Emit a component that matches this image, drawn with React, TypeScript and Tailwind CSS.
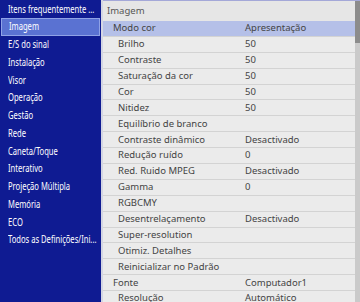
const leftItems = [
  "Imagem",
  "E/S do sinal",
  "Instalação",
  "Visor",
  "Operação",
  "Gestão",
  "Rede",
  "Caneta/Toque",
  "Interativo",
  "Projeção Múltipla",
  "Memória",
  "ECO",
  "Todos as Definições/Ini...",
];

const rows: { label: string; value?: string; top?: boolean }[] = [
  { label: "Modo cor", value: "Apresentação", top: true },
  { label: "Brilho", value: "50" },
  { label: "Contraste", value: "50" },
  { label: "Saturação da cor", value: "50" },
  { label: "Cor", value: "50" },
  { label: "Nitidez", value: "50" },
  { label: "Equilíbrio de branco" },
  { label: "Contraste dinâmico", value: "Desactivado" },
  { label: "Redução ruído", value: "0" },
  { label: "Red. Ruido MPEG", value: "Desactivado" },
  { label: "Gamma", value: "0" },
  { label: "RGBCMY" },
  { label: "Desentrelaçamento", value: "Desactivado" },
  { label: "Super-resolution" },
  { label: "Otimiz. Detalhes" },
  { label: "Reinicializar no Padrão" },
  { label: "Fonte", value: "Computador1", top: true },
  { label: "Resolução", value: "Automático" },
];

function MenuText({ children }: { children: string }) {
  // the projector menu squeezes its left column text horizontally
  return <span className="inline-block origin-left scale-x-[0.76] whitespace-nowrap">{children}</span>;
}

export default function App() {
  return (
    <div
      className="flex h-[302px] w-[360px] overflow-hidden bg-[#d4d6e4] text-[9.5px]"
      style={{ fontFamily: '"Noto Sans", "Open Sans", sans-serif' }}
    >
      {/* Left menu */}
      <div className="flex w-[101px] shrink-0 flex-col overflow-hidden bg-[#0f1b92] text-[10px] text-white">
        <div className="flex h-[18px] shrink-0 items-center pl-2">
          <MenuText>Itens frequentemente ...</MenuText>
        </div>
        {leftItems.map((item, i) => (
          <div key={item} className="h-[17.75px] shrink-0 px-px">
            <div
              className={`flex h-full items-center pl-[7px] ${
                i === 0 ? "border border-[#8fa2e6] bg-[#5a72d2] pl-[6px]" : ""
              }`}
            >
              <MenuText>{item}</MenuText>
            </div>
          </div>
        ))}
      </div>

      {/* Right panel */}
      <div className="ml-[2px] flex flex-1 overflow-hidden border-t border-[#a4a8d8] bg-[#ebebeb] text-[#444]">
        <div className="flex flex-1 flex-col">
          <div className="flex h-[20px] shrink-0 items-center bg-[#e6e6e6] pl-[4px] text-[#555]">
            Imagem
          </div>
          {rows.map((r, i) => (
            <div
              key={r.label}
              className={`flex h-[15.9px] shrink-0 items-center border-b border-[#d3d3d3] ${
                i === 0 ? "bg-[#b5c0e8]" : ""
              }`}
            >
              <div className={`w-[142px] whitespace-nowrap ${r.top ? "pl-[10px]" : "pl-[15px]"}`}>
                {r.label}
              </div>
              <div className="whitespace-nowrap">{r.value}</div>
            </div>
          ))}
        </div>
        {/* Scrollbar */}
        <div className="flex w-[5px] shrink-0 flex-col bg-[#cacaca]">
          <div className="h-[42px] bg-[#8c8c8c]" />
        </div>
      </div>
    </div>
  );
}
